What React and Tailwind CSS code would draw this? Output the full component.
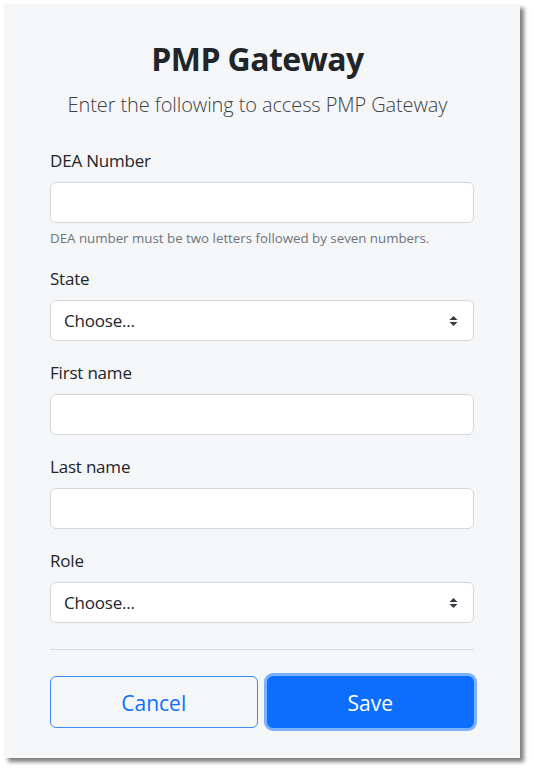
import React from 'react';

const font = { fontFamily: '"Open Sans", "Noto Sans", sans-serif' };

const SelectArrows = () => (
  <svg width="9" height="11" viewBox="0 0 9 11" className="absolute right-[15px] top-1/2 -translate-y-1/2">
    <path d="M4.5 0.5 L8.5 4.5 L0.5 4.5 Z" fill="#343a40" />
    <path d="M4.5 10.5 L8.5 6.5 L0.5 6.5 Z" fill="#343a40" />
  </svg>
);

const Label = ({ children }) => (
  <label className="block text-[17px] leading-[25px] tracking-[-0.2px] text-[#212529] mb-[9px]">{children}</label>
);

const TextField = ({ label, className = '' }) => (
  <div className={className}>
    <Label>{label}</Label>
    <input
      type="text"
      className="block w-full h-[41px] rounded-[6px] border border-[#d3d7dc] bg-white px-[13px] text-[17px] outline-none"
    />
  </div>
);

const SelectField = ({ label, className = '' }) => (
  <div className={className}>
    <Label>{label}</Label>
    <div className="relative h-[41px] rounded-[6px] border border-[#d3d7dc] bg-white flex items-center pl-[13px]">
      <span className="text-[17px] tracking-[-0.2px] text-[#212529]">Choose...</span>
      <SelectArrows />
    </div>
  </div>
);

export default function App() {
  return (
    <div className="min-h-screen bg-white p-1" style={font}>
      <div className="w-[516px] bg-[#f5f6f8] px-[46px] pt-[35px] pb-[30px] shadow-[4px_4px_4px_rgba(0,0,0,0.5)]">
        <div className="pr-[9px]">
          <h2 className="text-center text-[32px] leading-[40px] font-bold tracking-[-0.6px] text-[#212529]">PMP Gateway</h2>
          <p className="mt-[10px] text-center text-[20px] leading-[31px] font-light tracking-[-0.1px] text-[#3d4246]">
            Enter the following to access PMP Gateway
          </p>
        </div>

        <div className="mt-[28px]">
          <TextField label="DEA Number" />
          <p className="mt-[5px] text-[13.3px] leading-[21px] text-[#6c757d]">
            DEA number must be two letters followed by seven numbers.
          </p>
        </div>

        <SelectField label="State" className="mt-[17px]" />
        <TextField label="First name" className="mt-[19px]" />
        <TextField label="Last name" className="mt-[19px]" />
        <SelectField label="Role" className="mt-[19px]" />

        <hr className="mt-[26px] border-t border-[#d9dcdf]" />

        <div className="mt-[26px] grid grid-cols-2 gap-[9px]">
          <button className="h-[52px] pt-[3px] rounded-[6px] border border-[#3d8bfd] text-[#0d6efd] text-[21px]">
            Cancel
          </button>
          <button className="h-[52px] pt-[3px] rounded-[6px] border border-[#0d6efd] bg-[#0d6efd] text-white text-[21px] shadow-[0_0_0_3px_rgba(110,168,254,0.9)]">
            Save
          </button>
        </div>
      </div>
    </div>
  );
}
